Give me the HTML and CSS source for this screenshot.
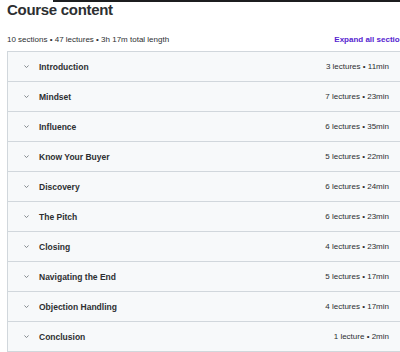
FILE: index.html
```html
<!DOCTYPE html>
<html lang="en">
<head>
  <meta charset="UTF-8" />
  <title>Course content</title>
  <link rel="stylesheet" href="styles.css">
</head>
<body>
  <div class="topbar"></div>
  <main class="curriculum">
    <h2 class="title">Course content</h2>

    <div class="summary">
      <span>10 sections • 47 lectures • 3h 17m total length</span>
      <button class="expand">Expand all sections</button>
    </div>

    <div class="sections">
      <div class="section"><svg class="chev" viewBox="0 0 5 3"><polyline points="0.4,0.5 2.5,2.5 4.6,0.5"/></svg><span class="name">Introduction</span><span class="meta">3 lectures • 11min</span></div>
      <div class="section"><svg class="chev" viewBox="0 0 5 3"><polyline points="0.4,0.5 2.5,2.5 4.6,0.5"/></svg><span class="name">Mindset</span><span class="meta">7 lectures • 23min</span></div>
      <div class="section"><svg class="chev" viewBox="0 0 5 3"><polyline points="0.4,0.5 2.5,2.5 4.6,0.5"/></svg><span class="name">Influence</span><span class="meta">6 lectures • 35min</span></div>
      <div class="section"><svg class="chev" viewBox="0 0 5 3"><polyline points="0.4,0.5 2.5,2.5 4.6,0.5"/></svg><span class="name">Know Your Buyer</span><span class="meta">5 lectures • 22min</span></div>
      <div class="section"><svg class="chev" viewBox="0 0 5 3"><polyline points="0.4,0.5 2.5,2.5 4.6,0.5"/></svg><span class="name">Discovery</span><span class="meta">6 lectures • 24min</span></div>
      <div class="section"><svg class="chev" viewBox="0 0 5 3"><polyline points="0.4,0.5 2.5,2.5 4.6,0.5"/></svg><span class="name">The Pitch</span><span class="meta">6 lectures • 23min</span></div>
      <div class="section"><svg class="chev" viewBox="0 0 5 3"><polyline points="0.4,0.5 2.5,2.5 4.6,0.5"/></svg><span class="name">Closing</span><span class="meta">4 lectures • 23min</span></div>
      <div class="section"><svg class="chev" viewBox="0 0 5 3"><polyline points="0.4,0.5 2.5,2.5 4.6,0.5"/></svg><span class="name">Navigating the End</span><span class="meta">5 lectures • 17min</span></div>
      <div class="section"><svg class="chev" viewBox="0 0 5 3"><polyline points="0.4,0.5 2.5,2.5 4.6,0.5"/></svg><span class="name">Objection Handling</span><span class="meta">4 lectures • 17min</span></div>
      <div class="section"><svg class="chev" viewBox="0 0 5 3"><polyline points="0.4,0.5 2.5,2.5 4.6,0.5"/></svg><span class="name">Conclusion</span><span class="meta">1 lecture • 2min</span></div>
    </div>
  </main>
</body>
</html>
```

FILE: styles.css
```css
body {
  margin: 0;
  width: 400px;
  height: 352px;
  overflow: hidden;
  background-color: #ffffff;
  font-family: 'Liberation Sans', Arial, sans-serif;
  color: #2d2f31;
}

.topbar {
  height: 2px;
  margin-left: 53px;
  background-color: #1c1d1f;
}

.curriculum {
  width: 396px;
  margin-left: 7px;
}

.title {
  margin: 0;
  font-size: 15px;
  line-height: 16px;
  font-weight: 700;
  letter-spacing: -0.3px;
}

.summary {
  display: flex;
  justify-content: space-between;
  align-items: center;
  margin-top: 15px;
  height: 12px;
  margin-bottom: 6px;
  font-size: 8px;
  color: #2d2f31;
}

.expand {
  padding: 0;
  border: none;
  background: none;
  font-family: inherit;
  font-size: 8px;
  font-weight: 700;
  color: #5624d0;
  margin-right: -6px;
}

.sections {
  border: 1px solid #d1d7dc;
  border-bottom: none;
}

.section {
  display: flex;
  align-items: center;
  height: 29px;
  padding: 0 13px 0 16px;
  background-color: #f7f9fa;
  border-bottom: 1px solid #d1d7dc;
  font-size: 8.5px;
}

.chev {
  width: 5px;
  height: 3px;
  fill: none;
  stroke: #6a6f73;
  stroke-width: 0.8;
  margin-right: 10px;
}

.name {
  flex: 1;
  font-weight: 700;
}

.meta {
  font-size: 8px;
  color: #2d2f31;
}
```
